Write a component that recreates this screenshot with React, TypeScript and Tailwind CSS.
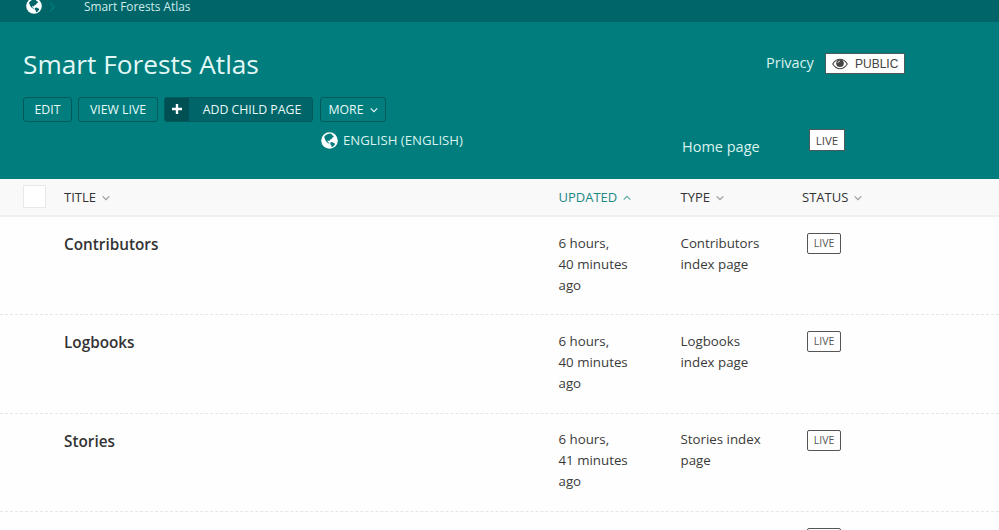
import React from "react";

type ArrowProps = { up?: boolean; className?: string };

function Arrow({ up = false, className = "" }: ArrowProps) {
  return (
    <svg
      viewBox="0 0 8 6"
      className={"mt-[1px] h-[6px] w-[8px] shrink-0 " + className}
      fill="none"
      stroke="currentColor"
      strokeWidth="1.1"
    >
      <path d={up ? "M0.7 4.7 4 1.3 7.3 4.7" : "M0.7 1.3 4 4.7 7.3 1.3"} />
    </svg>
  );
}

function Globe({ className, land }: { className: string; land: string }) {
  return (
    <svg viewBox="0 0 17 17" className={"shrink-0 " + className}>
      <circle cx="8.5" cy="8.5" r="8.3" fill="#fff" />
      <path
        d="M4.2 3.6 6.2 2.2 8.6 1.5 11.2 1.9 10.6 3 12.1 3.4 12.9 4.8 11.5 5.5 10.8 6.8 9 7.7 8.4 9.2 7.3 8.5 6.2 8.9 7.4 10.3 8.6 11 7.8 11.4 5.8 10.2 4.4 8.3 3.6 6 3.1 5.1Z"
        fill={land}
      />
      <path d="M9.4 10.6 11 10.1 13.5 11.2 14.1 12.3 12.6 14 10.7 15.3 10.3 13.4 9.2 12Z" fill={land} />
    </svg>
  );
}

function Eye() {
  return (
    <svg viewBox="0 0 16 12" className="h-[12px] w-[16px] shrink-0">
      <path d="M0.8 6C2.6 2.9 5.1 1.3 8 1.3S13.4 2.9 15.2 6C13.4 9.1 10.9 10.7 8 10.7S2.6 9.1 0.8 6Z" fill="none" stroke="#444" strokeWidth="1.1" />
      <circle cx="8" cy="5.2" r="3.8" fill="#444" />
      <path d="M5.9 5.1A2.1 2.1 0 0 1 8 3" fill="none" stroke="#ddd" strokeWidth="0.9" />
    </svg>
  );
}

const rows = [
  { title: "Contributors", updated: ["6 hours,", "40 minutes", "ago"], type: ["Contributors", "index page"], status: "LIVE" },
  { title: "Logbooks", updated: ["6 hours,", "40 minutes", "ago"], type: ["Logbooks", "index page"], status: "LIVE" },
  { title: "Stories", updated: ["6 hours,", "41 minutes", "ago"], type: ["Stories index", "page"], status: "LIVE" },
  { title: "", updated: [], type: [], status: "" },
];

function Lines({ lines }: { lines: string[] }) {
  return (
    <div className="pt-[15.5px] text-[13.3px] leading-[21.1px] text-[#3a3a3a]">
      {lines.map((line) => (
        <div key={line} className="whitespace-nowrap">{line}</div>
      ))}
    </div>
  );
}

const cols = "grid grid-cols-[64px_494.5px_122px_121.5px_1fr]";
const button = "flex h-[25px] items-center justify-center rounded-[3px] border border-[#00595b] text-[12.3px] text-[#eafafa]";
const heading = "flex items-center gap-[6px] pt-[1px]";

export default function App() {
  return (
    <div className="h-[530px] w-[999px] overflow-hidden bg-[#fefefe] font-['Open_Sans','Noto_Sans',sans-serif] text-[#333]">
      <nav className="flex h-[22px] items-start bg-[#006568] text-[11.85px] leading-[13px] text-[#cfebea]">
        <Globe className="mt-[-2px] ml-[26px] h-[16px] w-[16px]" land="#006568" />
        <svg viewBox="0 0 6 10" className="mt-[2px] ml-[7px] h-[10px] w-[6px]" fill="none" stroke="#008284" strokeWidth="1.1">
          <path d="M1 0.5 5 5 1 9.5" />
        </svg>
        <span className="ml-[29px]">Smart Forests Atlas</span>
      </nav>

      <header className="flex h-[157px] bg-[#007d7c] text-[#d9f3f0]">
        <div className="w-[682px] pl-[23px]">
          <h1 className="pt-[24px] text-[26.25px] leading-[36px] font-normal text-[#e3f8f6]">Smart Forests Atlas</h1>
          <div className="mt-[15px] flex">
            <button className={button + " w-[49px] pt-[1px]"}>EDIT</button>
            <button className={button + " ml-[6px] w-[80px] pt-[1px]"}>VIEW LIVE</button>
            <button className={button + " ml-[6px] w-[149px] overflow-hidden bg-[#006568]"}>
              <span className="flex h-full w-[24px] items-center justify-center bg-[#004f52]">
                <svg viewBox="0 0 10 10" className="mb-[2px] h-[10px] w-[10px]" stroke="#fff" strokeWidth="2.4">
                  <path d="M5 0V10M0 5H10" />
                </svg>
              </span>
              <span className="flex-1 pt-[1px] pl-[3px]">ADD CHILD PAGE</span>
            </button>
            <button className={button + " ml-[7px] w-[66px] gap-[6px] pt-[1px]"}>
              MORE
              <Arrow className="-translate-y-px" />
            </button>
          </div>
          <div className="mt-[9px] ml-[298px] flex items-center gap-[5px] text-[13.2px] leading-[18px]">
            <Globe className="h-[17px] w-[17px]" land="#007d7c" />
            <span className="mb-[1px]">ENGLISH (ENGLISH)</span>
          </div>
        </div>
        <div className="w-[240px] text-[14.5px] leading-[21px]">
          <div className="ml-[84px] flex items-center pt-[31px]">
            <span className="mt-[-2px] w-[59px]">Privacy</span>
            <span className="flex h-[21px] w-[80px] items-center gap-[7px] border border-[#4a5a5a] bg-white pl-[6px] font-['Liberation_Sans',Arial,sans-serif] text-[12px] text-[#444]">
              <Eye />
              <span className="pt-[1px]">PUBLIC</span>
            </span>
          </div>
          <div className="flex items-start pt-[55px]">
            <span className="w-[127px] pt-[7px]">Home page</span>
            <span className="flex h-[22px] w-[36px] items-center justify-center border border-[#4a5a5a] bg-white text-[11.5px] text-[#444]">LIVE</span>
          </div>
        </div>
      </header>

      <div className={cols + " h-[38px] items-center border-b-2 border-[#f0f0f0] bg-[#f9f9f9] text-[13px]"}>
        <div className="mb-[2px] ml-[23px] h-[23px] w-[23px] border border-[#e8e8e8] bg-white" />
        <div className={heading}>TITLE <Arrow className="text-[#999]" /></div>
        <div className={heading + " text-[#1b8886]"}>UPDATED <Arrow up className="opacity-70" /></div>
        <div className={heading}>TYPE <Arrow className="text-[#999]" /></div>
        <div className={heading}>STATUS <Arrow className="text-[#999]" /></div>
      </div>

      <main>
        {rows.map((row) => (
          <div key={row.title} className={cols + " h-[98.25px] border-b border-dashed border-[#e6e6e6]"}>
            <div />
            <div className="pt-[16px] text-[15.3px] leading-[22px] font-semibold">{row.title}</div>
            <Lines lines={row.updated} />
            <Lines lines={row.type} />
            <div className="pt-[16px] pl-[5px]">
              <span className="flex h-[21px] w-[34px] items-center justify-center rounded-[2px] border border-[#555] pt-[1px] text-[10.5px] text-[#555]">{row.status}</span>
            </div>
          </div>
        ))}
      </main>
    </div>
  );
}
